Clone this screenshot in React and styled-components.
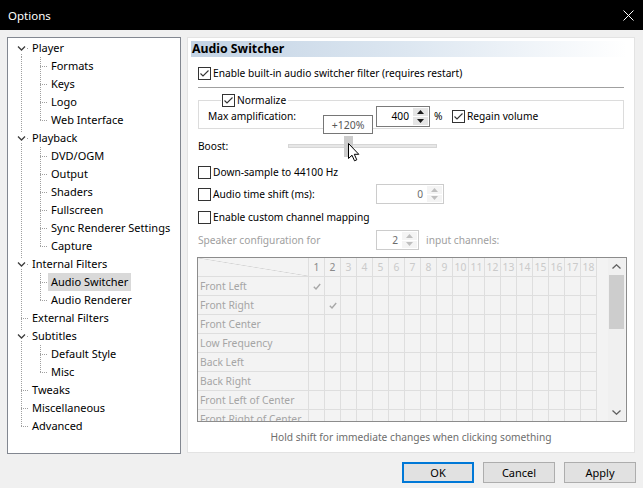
import React from 'react';
import styled, { createGlobalStyle } from 'styled-components';

const FONT = '"Noto Sans", "Open Sans", "DejaVu Sans", sans-serif';

const GlobalStyle = createGlobalStyle`
  html, body { margin: 0; padding: 0; background: #f0f0f0; }
  body { font-family: ${FONT}; color: #000; }
  * { box-sizing: border-box; }
`;

const Window = styled.div`
  width: 643px;
  height: 488px;
  display: flex;
  flex-direction: column;
  background: #f0f0f0;
  overflow: hidden;
`;

const TitleBar = styled.div`
  height: 30px;
  flex: none;
  background: #000;
  color: #fff;
  display: flex;
  align-items: center;
  justify-content: space-between;
  padding: 0 9px 0 8px;
  font-size: 11.5px;
`;

const Main = styled.div`
  display: flex;
  align-items: flex-start;
  gap: 6px;
  padding: 7px 8px 0 7px;
  height: 424px;
  flex: none;
`;

/* ---------- tree ---------- */

const TreePanel = styled.div`
  width: 174px;
  height: 417px;
  background: #fff;
  border: 1px solid #828790;
  padding-top: 1px;
  font-size: 11px;
`;

const TreeRow = styled.div`
  display: flex;
  align-items: center;
  height: 18px;
`;

const TreeLabel = styled.span`
  padding: 0 3px;
  height: 18px;
  line-height: 18px;
  white-space: nowrap;
  background: ${p => (p.$selected ? '#d9d9d9' : 'transparent')};
`;

const Guide = ({ w, x, vert, chevron }) => (
  <svg width={w} height="18" style={{ flex: 'none', display: 'block' }}>
    {vert !== 'none' && (
      <line
        x1={x + 0.5}
        x2={x + 0.5}
        y1={vert === 'down' ? 9 : 0}
        y2={vert === 'up' ? 9 : 18}
        stroke="#a0a0a0"
        strokeDasharray="1 1"
      />
    )}
    {vert !== 'pass' && (
      <line x1={x} x2={w} y1="9.5" y2="9.5" stroke="#a0a0a0" strokeDasharray="1 1" />
    )}
    {chevron && (
      <>
        <rect x={x - 5} y="4" width="11" height="10" fill="#fff" />
        <path d={`M${x - 3} 7.5 L${x + 0.5} 11 L${x + 4} 7.5`} fill="none" stroke="#3c3c3c" strokeWidth="1.3" />
      </>
    )}
  </svg>
);

const TREE = [
  { label: 'Player', level: 0, exp: true },
  { label: 'Formats', level: 1 },
  { label: 'Keys', level: 1 },
  { label: 'Logo', level: 1 },
  { label: 'Web Interface', level: 1, last: true },
  { label: 'Playback', level: 0, exp: true },
  { label: 'DVD/OGM', level: 1 },
  { label: 'Output', level: 1 },
  { label: 'Shaders', level: 1 },
  { label: 'Fullscreen', level: 1 },
  { label: 'Sync Renderer Settings', level: 1 },
  { label: 'Capture', level: 1, last: true },
  { label: 'Internal Filters', level: 0, exp: true },
  { label: 'Audio Switcher', level: 1, selected: true },
  { label: 'Audio Renderer', level: 1, last: true },
  { label: 'External Filters', level: 0 },
  { label: 'Subtitles', level: 0, exp: true },
  { label: 'Default Style', level: 1 },
  { label: 'Misc', level: 1, last: true },
  { label: 'Tweaks', level: 0 },
  { label: 'Miscellaneous', level: 0 },
  { label: 'Advanced', level: 0, last: true },
];

const Tree = () => (
  <TreePanel>
    {TREE.map((item, i) => {
      let rootVert = 'full';
      if (item.level === 0 && i === 0) rootVert = 'down';
      if (item.level === 0 && item.last) rootVert = 'up';
      return (
        <TreeRow key={item.label}>
          {item.level === 0 ? (
            <Guide w={21} x={13} vert={rootVert} chevron={item.exp} />
          ) : (
            <>
              <Guide w={21} x={13} vert="pass" />
              <Guide w={19} x={11} vert={item.last ? 'up' : 'full'} />
            </>
          )}
          <TreeLabel $selected={item.selected}>{item.label}</TreeLabel>
        </TreeRow>
      );
    })}
  </TreePanel>
);

/* ---------- page ---------- */

const Page = styled.div`
  width: 448px;
  height: 416px;
  background: #fff;
  border: 1px solid #e3e3e3;
  padding: 3px 10px 0 10px;
  display: flex;
  flex-direction: column;
  font-size: 10.2px;
`;

const PageHeader = styled.div`
  height: 16px;
  margin: 0 -3px 0 -7px;
  padding-left: 1px;
  line-height: 16px;
  font-size: 12.3px;
  font-weight: 700;
  background: linear-gradient(to right, #c3d3e4 0%, #dde7f1 50%, #ffffff 100%);
`;

const Row = styled.div`
  display: flex;
  align-items: center;
  height: ${p => p.$h || 16}px;
  margin-top: ${p => p.$mt || 0}px;
  color: ${p => (p.$disabled ? '#a0a0a0' : '#000')};
  position: relative;
`;

const Label = styled.span`
  width: ${p => p.$w}px;
  flex: none;
  white-space: nowrap;
`;

const Separator = styled.div`
  height: 1px;
  margin-top: 6px;
  background: #a0a0a0;
`;

const Box = styled.span`
  width: 13px;
  height: 13px;
  flex: none;
  border: 1px solid #333;
  background: #fff;
  display: inline-flex;
  align-items: center;
  justify-content: center;
  margin-right: 2px;
`;

const CheckBox = ({ checked }) => (
  <Box>
    {checked && (
      <svg width="11" height="11" viewBox="0 0 11 11">
        <path d="M1.5 5.5 L4 8 L9.5 2.5" fill="none" stroke="#333" strokeWidth="1.1" />
      </svg>
    )}
  </Box>
);

const Check = ({ checked, children }) => (
  <>
    <CheckBox checked={checked} />
    <span>{children}</span>
  </>
);

const Group = styled.fieldset`
  margin: 4px 0 0 0;
  padding: 0 0 1px 9px;
  border: 1px solid #dcdcdc;
  min-width: 0;
`;

const Legend = styled.legend`
  display: flex;
  align-items: center;
  height: 16px;
  padding: 0 2px 0 1px;
  margin-left: 13px;
`;

const SpinBox = styled.div`
  display: flex;
  width: ${p => p.$w}px;
  height: ${p => p.$h}px;
  flex: none;
  border: 1px solid ${p => (p.$disabled ? '#cccccc' : '#7a7a7a')};
  background: #fff;
  color: ${p => (p.$disabled ? '#6d6d6d' : '#000')};
`;

const SpinValue = styled.div`
  flex: 1;
  display: flex;
  align-items: center;
  justify-content: flex-end;
  padding-right: 4px;
`;

const SpinArrows = styled.div`
  width: 16px;
  display: flex;
  flex-direction: column;
  gap: 1px;
  padding: 1px 1px 1px 0;
`;

const SpinBtn = styled.div`
  flex: 1;
  display: flex;
  align-items: center;
  justify-content: center;
  background: ${p => (p.$disabled ? '#f4f4f4' : '#e5e5e5')};
`;

const Spin = ({ value, w, h = 21, disabled }) => {
  const c = disabled ? '#bfbfbf' : '#1a1a1a';
  return (
    <SpinBox $w={w} $h={h} $disabled={disabled}>
      <SpinValue>{value}</SpinValue>
      <SpinArrows>
        <SpinBtn $disabled={disabled}>
          <svg width="7" height="4"><path d="M0 4 L3.5 0 L7 4 Z" fill={c} /></svg>
        </SpinBtn>
        <SpinBtn $disabled={disabled}>
          <svg width="7" height="4"><path d="M0 0 L3.5 4 L7 0 Z" fill={c} /></svg>
        </SpinBtn>
      </SpinArrows>
    </SpinBox>
  );
};

const Slider = styled.div`
  position: relative;
  width: 149px;
  height: 22px;
  display: flex;
  align-items: center;
`;

const Track = styled.div`
  width: 100%;
  height: 4px;
  background: #e7e7e7;
  border: 1px solid #d6d6d6;
`;

const Thumb = styled.div`
  position: absolute;
  left: 56px;
  top: 1px;
  width: 9px;
  height: 21px;
  background: #cccccc;
`;

const Tip = styled.div`
  position: absolute;
  left: 35px;
  top: -20px;
  width: 50px;
  height: 19px;
  border: 1px solid #767676;
  background: #fff;
  color: #575757;
  font-size: 10.5px;
  display: flex;
  align-items: center;
  justify-content: center;
`;

const Pointer = styled.svg`
  position: absolute;
  left: 60px;
  top: 8px;
`;

/* ---------- channel grid ---------- */

const GridBox = styled.div`
  margin: 7px -3px 0 -1px;
  height: 165px;
  border: 1px solid #8c8c8c;
  background: #f3f3f3;
  display: flex;
  overflow: hidden;
`;

const Table = styled.div`
  flex: 1;
  display: grid;
  grid-template-columns: 111px repeat(18, 16px);
  grid-auto-rows: 19px;
  align-content: start;
  font-size: 10.3px;
`;

const Cell = styled.div`
  border-right: 1px solid #dedede;
  border-bottom: 1px solid #dedede;
  display: flex;
  align-items: center;
  justify-content: ${p => (p.$label ? 'flex-start' : 'center')};
  padding-left: ${p => (p.$label ? 2 : 0)}px;
  color: ${p => p.$color || '#a5a5a5'};
  white-space: nowrap;
  overflow: hidden;
`;

const Corner = styled(Cell)`
  background: linear-gradient(to top right, transparent calc(50% - 0.6px), #d4d4d4 50%, transparent calc(50% + 0.6px));
`;

const Scroll = styled.div`
  width: 17px;
  flex: none;
  margin-right: 1px;
  display: flex;
  flex-direction: column;
  align-items: center;
  background: #f0f0f0;
`;

const ScrollArrow = styled.div`
  height: 17px;
  flex: none;
  display: flex;
  align-items: center;
  justify-content: center;
`;

const ScrollThumb = styled.div`
  width: 15px;
  height: 54px;
  background: #cdcdcd;
`;

const ScrollTrack = styled.div`
  flex: 1;
`;

const SPEAKERS = [
  'Front Left',
  'Front Right',
  'Front Center',
  'Low Frequency',
  'Back Left',
  'Back Right',
  'Front Left of Center',
  'Front Right of Center',
];

// default stereo mapping: channel 1 -> front left, channel 2 -> front right
const MAPPED = { 0: 0, 1: 1 };

const Tick = () => (
  <svg width="8" height="7" viewBox="0 0 8 7">
    <path d="M0.8 3.8 L3 6 L7.2 1" fill="none" stroke="#a8a8a8" strokeWidth="1.4" />
  </svg>
);

const ChannelGrid = () => (
  <GridBox>
    <Table>
      <Corner />
      {Array.from({ length: 18 }, (_, i) => (
        <Cell key={'h' + i} $color={i < 2 ? '#8a8a8a' : '#cacaca'}>{i + 1}</Cell>
      ))}
      {SPEAKERS.map((name, r) => (
        <React.Fragment key={name}>
          <Cell $label>{name}</Cell>
          {Array.from({ length: 18 }, (_, c) => (
            <Cell key={c}>{MAPPED[r] === c ? <Tick /> : null}</Cell>
          ))}
        </React.Fragment>
      ))}
    </Table>
    <Scroll>
      <ScrollArrow>
        <svg width="9" height="5"><path d="M0.5 4.5 L4.5 0.8 L8.5 4.5" fill="none" stroke="#606060" strokeWidth="1.3" /></svg>
      </ScrollArrow>
      <ScrollThumb />
      <ScrollTrack />
      <ScrollArrow>
        <svg width="9" height="5"><path d="M0.5 0.5 L4.5 4.2 L8.5 0.5" fill="none" stroke="#606060" strokeWidth="1.3" /></svg>
      </ScrollArrow>
    </Scroll>
  </GridBox>
);

const Hint = styled.div`
  margin-top: 7px;
  height: 16px;
  line-height: 16px;
  text-align: center;
  color: #6d6d6d;
`;

/* ---------- footer ---------- */

const Footer = styled.div`
  display: flex;
  justify-content: flex-end;
  gap: 9px;
  padding: 8px 7px 0 0;
`;

const Button = styled.button`
  width: 72px;
  height: 21px;
  padding: 0;
  font-family: ${FONT};
  font-size: 11px;
  color: #000;
  background: #e1e1e1;
  border: 1px solid ${p => (p.$default ? '#0078d7' : '#adadad')};
  box-shadow: ${p => (p.$default ? 'inset 0 0 0 1px #0078d7' : 'none')};
`;

export default function App() {
  return (
    <Window>
      <GlobalStyle />
      <TitleBar>
        <span>Options</span>
        <svg width="11" height="11" viewBox="0 0 11 11">
          <path d="M0.5 0.5 L10.5 10.5 M10.5 0.5 L0.5 10.5" stroke="#fff" strokeWidth="1" />
        </svg>
      </TitleBar>
      <Main>
        <Tree />
        <Page>
          <PageHeader>Audio Switcher</PageHeader>
          <Row $mt={8}>
            <Check checked>Enable built-in audio switcher filter (requires restart)</Check>
          </Row>
          <Separator />
          <Group>
            <Legend>
              <Check checked>Normalize</Check>
            </Legend>
            <Row $h={22} style={{ marginTop: -3 }}>
              <Label $w={168}>Max amplification:</Label>
              <Spin value="400" w={54} />
              <Label $w={22} style={{ paddingLeft: 4 }}>%</Label>
              <Check checked>Regain volume</Check>
            </Row>
          </Group>
          <Row $h={22} $mt={6}>
            <Label $w={90}>Boost:</Label>
            <Slider>
              <Track />
              <Thumb />
              <Tip>+120%</Tip>
              <Pointer width="12" height="19" viewBox="0 0 12 19">
                <path d="M0.5 0.5 L0.5 15.5 L4 12.2 L6.5 17.8 L8.8 16.8 L6.3 11.3 L10.8 11.3 Z" fill="#fff" stroke="#000" strokeWidth="1" />
              </Pointer>
            </Slider>
          </Row>
          <Row $mt={7}>
            <Check>Down-sample to 44100 Hz</Check>
          </Row>
          <Row $h={20} $mt={4}>
            <Label $w={178}>
              <Row as="span"><Check>Audio time shift (ms):</Check></Row>
            </Label>
            <Spin value="0" w={68} h={20} disabled />
          </Row>
          <Row $mt={5}>
            <Check>Enable custom channel mapping</Check>
          </Row>
          <Row $h={20} $mt={5} $disabled>
            <Label $w={178}>Speaker configuration for</Label>
            <Spin value="2" w={43} h={20} disabled />
            <span style={{ marginLeft: 7 }}>input channels:</span>
          </Row>
          <ChannelGrid />
          <Hint>Hold shift for immediate changes when clicking something</Hint>
        </Page>
      </Main>
      <Footer>
        <Button $default>OK</Button>
        <Button>Cancel</Button>
        <Button>Apply</Button>
      </Footer>
    </Window>
  );
}
